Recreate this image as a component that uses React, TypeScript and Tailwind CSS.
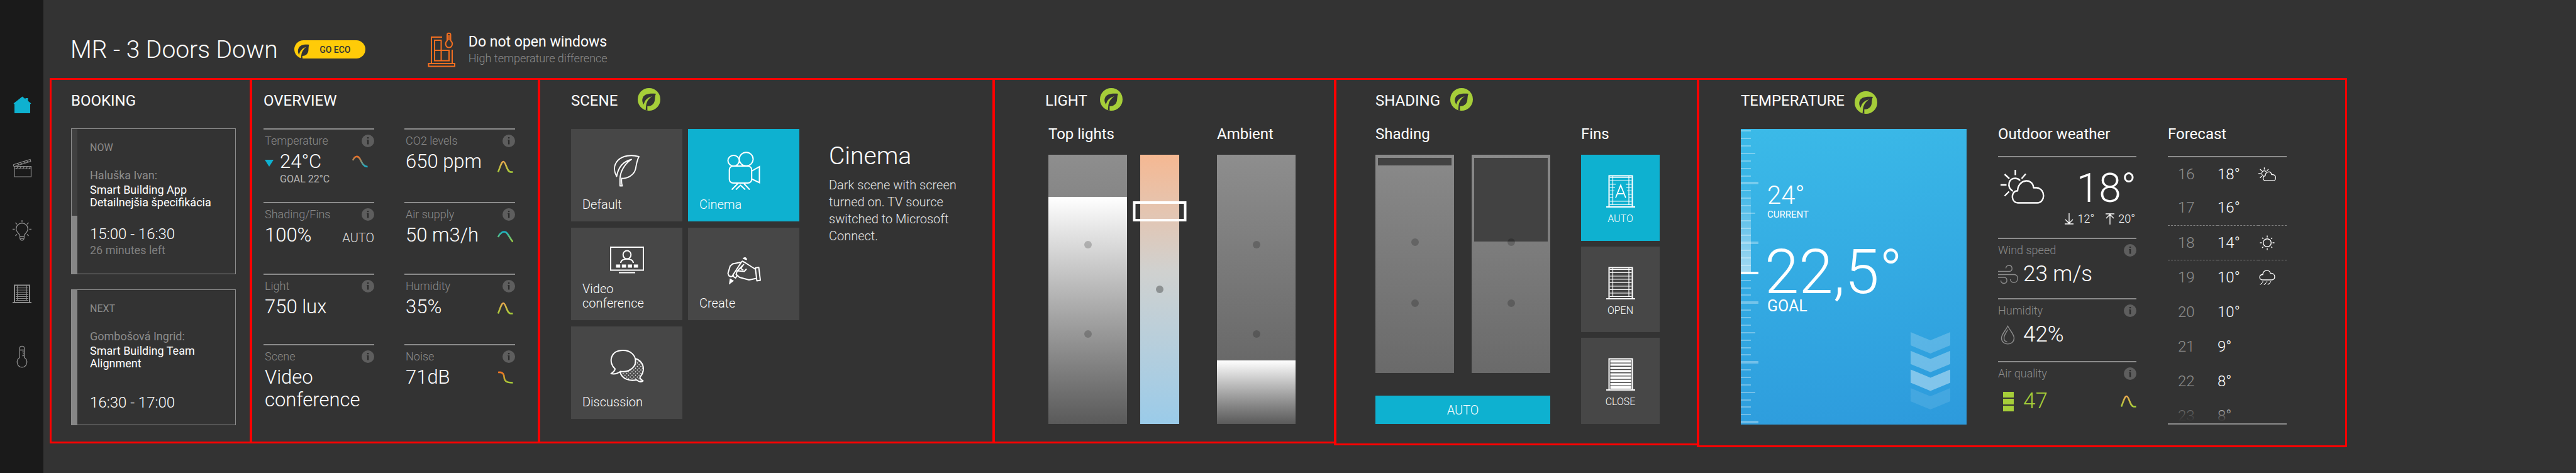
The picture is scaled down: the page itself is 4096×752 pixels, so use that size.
import React, { useState } from "react";

/* ---------- icons ---------- */

function EcoBadge() {
  return (
    <svg className="h-9 w-9 shrink-0" viewBox="0 0 36 36" aria-hidden="true">
      <circle cx="18" cy="18" r="18" fill="#a6ce39" />
      <path
        fill="#333333"
        d="M29 9C20 8 12 9 9 13.6C6.3 18 7 22 9.6 26.3C11 20 15 15 23 13C17 17 14 22 13.3 28L12.6 35.2L15.4 36L15.3 29C21 29 26 26 27 20C27.7 15 27.4 12 29 9Z"
      />
    </svg>
  );
}

function GoEcoLeaf() {
  return (
    <svg className="h-7 w-5 shrink-0" viewBox="0 0 20 28" aria-hidden="true">
      <path
        fill="#333333"
        d="M18.5 6C11 5 4.5 6.5 2 11C0 15 0.600 19 2.600 22.500C3.500 16.500 7 12 13.500 9.800C9 13.500 6.400 18 6 23.500L5.500 28H8L7.700 24C12.500 24 16.500 21 17.300 16C17.700 12 17.500 9 18.500 6Z"
      />
    </svg>
  );
}

function WindowAlertIcon() {
  return (
    <svg className="h-14 w-11 shrink-0" viewBox="0 0 44 56" fill="none" stroke="#f36f21" strokeWidth="2" aria-hidden="true">
      <path d="M23 8H6V50M39 28V50M11 13H21.500V45.500H11ZM11 29H34V45.500H21.500M1.500 50H43V54.500H1.500Z" />
      <path d="M31 4.500C31 0.800 36.500 0.800 36.500 4.500V13.500C41.500 18 38.500 24.500 33.800 24.500C29 24.500 26.500 18 31 13.500Z" />
      <path d="M33.800 5V13" />
    </svg>
  );
}

function HomeIcon() {
  return (
    <svg className="h-9 w-9" viewBox="0 0 36 36" aria-hidden="true">
      <path fill="#0eb1d0" d="M4.500 15.500L18.500 4.500L23.500 8.400V7H27.500V11.500L32.500 15.500L31 16.500V31H6V16.500Z" />
    </svg>
  );
}

function ClapperIcon() {
  return (
    <svg className="h-9 w-9" viewBox="0 0 36 36" fill="none" stroke="#8c8c8c" strokeWidth="1.200" aria-hidden="true">
      <path d="M6 15.500H32.500V32H6ZM6 19.500H32.500" />
      <path d="M5 12.500L31 4.500L31.800 7.500L6.500 15.500C4 16 4 12.800 5 12.500Z" />
      <path d="M9 19.500L12 15.500M14 19.500L17 15.500M19 19.500L22 15.500M24 19.500L27 15.500M29 19.500L32 15.500M10 11L13.500 13M15 9.500L18.500 11.500M20 8L23.500 10M25 6.500L28.500 8.500" />
    </svg>
  );
}

function BulbIcon() {
  return (
    <svg className="h-9 w-9" viewBox="0 0 36 36" fill="none" stroke="#8c8c8c" strokeWidth="1.300" aria-hidden="true">
      <path d="M14.500 28V25.500C14.500 23 8.700 20.500 8.700 14.800C8.700 3 27.300 3 27.300 14.800C27.300 20.500 21.500 23 21.500 25.500V28C21.500 29 21.500 33 18 33C14.500 33 14.500 29 14.500 28ZM14.500 27H21.500M15.500 30H20.500" />
      <path d="M18 1V4.500M3 15.500H6.500M29.500 15.500H33M7.500 5L10 7.500M28.500 5L26 7.500M7.500 26L10 23.500M28.500 26L26 23.500" />
    </svg>
  );
}

function BlindsNavIcon() {
  return (
    <svg className="h-9 w-9" viewBox="0 0 36 36" fill="none" stroke="#8c8c8c" aria-hidden="true">
      <path strokeWidth="2" d="M6 31V4.500H30V31M3 32H33" />
      <path strokeWidth="1" d="M10.500 5V29M25.500 5V29M8 7.500H28M8 10.500H28M8 13.500H28M8 16.500H28M8 19.500H28M8 22.500H28M8 25.500H28M8 28.500H28" />
    </svg>
  );
}

function ThermometerIcon() {
  return (
    <svg className="h-9 w-9" viewBox="0 0 36 36" fill="none" stroke="#8c8c8c" strokeWidth="1.300" aria-hidden="true">
      <path d="M14.300 19.500V5C14.300 0.200 21.700 0.200 21.700 5V19.500C29 24 25.500 34.800 18 34.800C10.500 34.800 7 24 14.300 19.500ZM14.300 7.500H21.700M18.500 10.500H21.700M19.500 13.500H21.700M18.500 16.500H21.700" />
    </svg>
  );
}

function LeafIcon() {
  return (
    <svg className="h-[51px] w-[41px]" viewBox="0 0 41 51" fill="none" stroke="#ffffff" strokeWidth="1.900" strokeLinejoin="round" aria-hidden="true">
      <path d="M40 3C28 -0.500 14 1 6.500 9C-1 17 0.500 27 4.500 34.500C6.500 23 13 11 28 7.500C16 15 10.300 28 9.800 38V49.500H13.500C12.200 46 12 42 12.500 37.500C22 38.500 32 32 34.500 23C36 16 36.500 9 40 3Z" />
    </svg>
  );
}

function CameraIcon() {
  return (
    <svg className="h-[61px] w-[53px]" viewBox="0 0 53 61" fill="none" stroke="#ffffff" strokeWidth="2" aria-hidden="true">
      <ellipse cx="10.500" cy="14.500" rx="9" ry="8.500" />
      <ellipse cx="30.500" cy="12" rx="11" ry="10.800" />
      <rect x="3.700" y="23" width="35.500" height="27" rx="6" />
      <path d="M39.200 31L51.500 24V49.500L39.200 43.500M17 51L7.500 60.500M27 51L36 60.500M14 60.500L21.500 53.500L29 60.500" />
    </svg>
  );
}

function VideoConferenceIcon() {
  return (
    <svg className="h-[50px] w-[54px]" viewBox="0 0 54 50" fill="none" stroke="#ffffff" strokeWidth="2" aria-hidden="true">
      <rect x="1" y="1" width="52" height="36.500" />
      <ellipse cx="27" cy="13" rx="6.300" ry="6.500" />
      <path d="M17 26C17.500 17.500 36.500 17.500 37 26M14 41.500H40" />
      <path fill="#ffffff" stroke="none" d="M9.500 28.500H16.200V33.500H9.500ZM18.800 28.500H25.500V33.500H18.800ZM28.300 28.500H35V33.500H28.300ZM37.800 28.500H44.500V33.500H37.800Z" />
    </svg>
  );
}

function CreateIcon() {
  return (
    <svg className="h-[48px] w-[54px]" viewBox="0 -3 54 48" fill="none" stroke="#ffffff" strokeWidth="2" strokeLinejoin="round" aria-hidden="true">
      <path fill="#ffffff" stroke="none" d="M24.800 3.500C26 -0.500 32.500 0 31.800 5.800ZM3 44.500L4.500 34.500L11 38.500Z" />
      <path d="M24 7L8.500 30.500L13.500 34L17 29M24 7L29.500 10L45 20M21.500 9L9 11.500L5 15L1.500 26.500L3 30.500L6.500 32L11 29.500" />
      <path d="M27 12L16 23L14.500 28.500L20 33L35 37L47 34.500M16 22.500L27.500 23.500L31 19.500M25 14L22 19L26 21.500" />
      <path d="M45 18L50.500 17L53 37.500L47.500 38.500Z" />
    </svg>
  );
}

function DiscussionIcon() {
  return (
    <svg className="h-[60px] w-[54px]" viewBox="0 0 54 60" aria-hidden="true">
      <defs>
        <pattern id="bubble-dots" width="5.600" height="5.600" patternUnits="userSpaceOnUse">
          <circle cx="1.400" cy="1.400" r="0.950" fill="#ffffff" />
          <circle cx="4.200" cy="4.200" r="0.950" fill="#ffffff" />
        </pattern>
      </defs>
      <path
        fill="url(#bubble-dots)"
        stroke="#ffffff"
        strokeWidth="2"
        strokeLinejoin="round"
        d="M40 14C48 16 53 23 53 30C53 36 51 40 47.500 43.500C47.500 46 50 48 52.500 49.500C50 52 46 51 42 48C30 50.500 19 46 16 36Z"
      />
      <path
        fill="#474747"
        stroke="#ffffff"
        strokeWidth="2"
        strokeLinejoin="round"
        d="M8 30.500C-3 21 0 1 20.500 1C33 1 40.500 9 40.500 18C40.500 29 29 36.500 16.500 34.500C12 38 6 39 1.500 38C5 36 7.500 34 8 30.500Z"
      />
    </svg>
  );
}

function FinsIcon({ mode }: { mode: "auto" | "open" | "close" }) {
  return (
    <svg className="h-[52px] w-[46px]" viewBox="0 0 46 52" fill="none" stroke="#ffffff" aria-hidden="true">
      <path strokeWidth="2" d="M4.500 50V1.500H41.500V50M0 51H46" />
      {mode === "close" ? (
        <path
          strokeWidth="3.800"
          d="M6.500 5.500H39.500M6.500 10.700H39.500M6.500 15.900H39.500M6.500 21.100H39.500M6.500 26.300H39.500M6.500 31.500H39.500M6.500 36.700H39.500M6.500 41.900H39.500M6.500 47H39.500"
        />
      ) : null}
      {mode === "open" ? (
        <path
          strokeWidth="1.200"
          d="M10.500 2V48M36 2V48M5.500 4.500H40.500M5.500 9.500H40.500M5.500 15H40.500M5.500 20H40.500M5.500 25.500H40.500M5.500 31H40.500M5.500 36.500H40.500M5.500 42H40.500M5.500 47.500H40.500"
        />
      ) : null}
      {mode === "auto" ? (
        <path
          strokeWidth="1.200"
          d="M10.500 2V48M36 2V48M5.500 4.500H40.500M5.500 9.500H40.500M5.500 42H40.500M5.500 47.500H40.500M5.500 15H15M31 15H40.500M5.500 20H14M32 20H40.500M5.500 25.500H13M33 25.500H40.500M5.500 31H11M35 31H40.500M5.500 36.500H10M36 36.500H40.500"
        />
      ) : null}
      {mode === "auto" ? <path strokeWidth="1.800" d="M15 36.500L23 16.500L31 36.500M17.800 30H28.200" /> : null}
    </svg>
  );
}

function PartlyCloudyIcon({ className, weight }: { className: string; weight: number }) {
  return (
    <svg className={className} viewBox="0 0 70 54" fill="none" stroke="#ffffff" strokeWidth={weight} strokeLinejoin="round" aria-hidden="true">
      <path d="M27.500 52.500H58.500C71 52.500 72.500 30.500 57.500 28.500H52.500C51 12.500 28 14 27 33.500H25.500C16 35 16.500 52 27.500 52.500Z" />
      <path d="M19.500 34C9 27 13 12.500 24 13.500C27 13.800 29.500 15 31 17M23.500 0V8.500M0 24H9.500M6.500 7L14 14M40 6.500L33.500 14M6.500 41.500L13.500 34.500" />
    </svg>
  );
}

function SunIcon() {
  return (
    <svg className="h-6 w-7" viewBox="0 0 28 24" fill="none" stroke="#ffffff" strokeWidth="1.400" aria-hidden="true">
      <circle cx="14" cy="12" r="6.300" />
      <path d="M14 0.500V3.500M14 20.500V23.500M2.500 12H5.500M22.500 12H25.500M6 4L7.800 5.800M22 4L20.200 5.800M6 20L7.800 18.200M22 20L20.200 18.200" />
    </svg>
  );
}

function RainIcon() {
  return (
    <svg className="h-6 w-7" viewBox="0 0 28 24" fill="none" stroke="#ffffff" strokeWidth="1.300" aria-hidden="true">
      <path d="M6.500 16C0.500 16 0.500 7.500 7 7.500C7.500 -1 18.500 -0.500 19 5.500C27.500 4.500 28 16 21.500 16Z" />
      <path strokeDasharray="2.200 1" d="M7.500 18.500L3 24M14 18.500L9 24M20 18.500L15 24" />
    </svg>
  );
}

function WindIcon() {
  return (
    <svg className="h-[31px] w-8 shrink-0" viewBox="0 0 32 31" fill="none" stroke="#8c8c8c" strokeWidth="1.400" aria-hidden="true">
      <path d="M0 10.500H18C24 10.500 23.500 1 17.500 1C14.500 1 12.500 3 12.500 5.500M0 15.500H26C33 15.500 33 28 25.500 28C22 28 19.500 26 19.500 23M0 20H10C15.500 20 15.500 29.500 9.500 29.500C6.500 29.500 4.500 27.500 4.500 25" />
    </svg>
  );
}

function DropIcon() {
  return (
    <svg className="h-[31px] w-8 shrink-0" viewBox="0 0 32 31" fill="none" stroke="#8c8c8c" strokeWidth="1.400" aria-hidden="true">
      <path d="M15.500 1.500C11 10 5.500 14.500 5.500 20.500C5.500 33 25.500 33 25.500 20.500C25.500 14.500 20 10 15.500 1.500Z" />
      <path d="M15.500 7C13 12 9.500 15.500 9.500 20.500C9.500 23.500 11.500 26 14.500 26.500" />
    </svg>
  );
}

function ArrowToLine({ up }: { up?: boolean }) {
  return (
    <svg className="h-[18px] w-[14px]" viewBox="0 0 14 18" fill="none" stroke="#ffffff" strokeWidth="1.300" aria-hidden="true">
      {up ? <path d="M0 1H14M7 18V2M1 8L7 2L13 8" /> : <path d="M0 17H14M7 0V16M1 10L7 16L13 10" />}
    </svg>
  );
}

type TrendKind = "coolDown" | "peak" | "supply" | "drop";

const TRENDS: Record<TrendKind, { d: string; top: string; bottom: string }> = {
  coolDown: { d: "M1 8C4 1 9 0 12 5C15 10 17 18 24.500 18", top: "#f36f21", bottom: "#0eb1d0" },
  peak: { d: "M1 18.500C4 12 6 2 9.500 2C13.500 2 14.500 18.500 21 18.500H24.500", top: "#f0a850", bottom: "#a6ce39" },
  supply: { d: "M1 11C4 4 9 1.500 13 3C17 5 19 12 24.500 18.500", top: "#0eb1d0", bottom: "#a6ce39" },
  drop: { d: "M1 2C7 1.500 10 3 10.500 9C11 15 13 18.500 24.500 18.500", top: "#f36f21", bottom: "#a6ce39" },
};

function Trend({ kind, className }: { kind: TrendKind; className?: string }) {
  const t = TRENDS[kind];
  const id = "trend-" + kind;
  return (
    <svg className={"h-5 w-[25px] shrink-0 " + (className ?? "")} viewBox="0 0 25 20" fill="none" aria-hidden="true">
      <defs>
        <linearGradient id={id} gradientUnits="userSpaceOnUse" x1="0" y1="1" x2="0" y2="19">
          <stop offset="0" stopColor={t.top} />
          <stop offset="1" stopColor={t.bottom} />
        </linearGradient>
      </defs>
      <path d={t.d} stroke={`url(#${id})`} strokeWidth="2.600" />
    </svg>
  );
}

function InfoButton({ topic }: { topic: string }) {
  return (
    <button type="button" aria-label={"About " + topic} className="h-5 w-5 shrink-0">
      <svg className="h-5 w-5" viewBox="0 0 20 20" aria-hidden="true">
        <circle cx="10" cy="10" r="10" fill="#5e5e5e" />
        <path fill="#2b2b2b" d="M8.900 4H11.300V6.300H8.900ZM8.200 8H11.300V15.500H8.900V9.300H8.200Z" />
      </svg>
    </button>
  );
}

/* ---------- shared parts ---------- */

function Panel({
  title,
  eco,
  ecoClass,
  className,
  children,
}: {
  title: string;
  eco?: boolean;
  ecoClass?: string;
  className: string;
  children: React.ReactNode;
}) {
  return (
    <section className={"border-[3px] border-[#ff0000] pt-[13px] " + className}>
      <div className="flex h-9 items-center">
        <h2 className="pt-1 text-2xl/7 font-normal">{title}</h2>
        {eco ? (
          <span className={ecoClass}>
            <EcoBadge />
          </span>
        ) : null}
      </div>
      {children}
    </section>
  );
}

function Dot({ at, className }: { at: number; className?: string }) {
  return (
    <span
      className={"pointer-events-none absolute left-1/2 size-3 -translate-x-1/2 -translate-y-1/2 rounded-full " + (className ?? "bg-black/20")}
      style={{ top: at + "%" }}
    />
  );
}

function VerticalRange({
  label,
  value,
  onChange,
}: {
  label: string;
  value: number;
  onChange: (v: number) => void;
}) {
  return (
    <input
      type="range"
      min={0}
      max={100}
      step="any"
      aria-label={label}
      value={value}
      onChange={(e) => onChange(Number(e.target.value))}
      className="absolute inset-0 h-full w-full cursor-pointer opacity-0 [direction:rtl] [writing-mode:vertical-lr]"
    />
  );
}

/* ---------- booking ---------- */

function BookingCard({
  state,
  owner,
  lines,
  time,
  left,
  elapsed,
  className,
  timeClass,
}: {
  state: string;
  owner: string;
  lines: string[];
  time: string;
  left?: string;
  elapsed: number;
  className: string;
  timeClass: string;
}) {
  return (
    <article className={"flex border border-[#8c8c8c] " + className}>
      <div className="w-[9px] shrink-0 bg-[#868686]">
        <div className="bg-[#404040]" style={{ height: elapsed + "%" }} />
      </div>
      <div className="pt-5 pl-5">
        <p className="text-base/5 text-[#8c8c8c]">{state}</p>
        <p className="mt-6 text-lg/5 text-[#8c8c8c]">{owner}</p>
        <h3 className="mt-[3px] text-lg/5 font-normal">
          {lines.map((l) => (
            <span key={l} className="block">
              {l}
            </span>
          ))}
        </h3>
        <p className={"text-2xl/7 font-light " + timeClass}>{time}</p>
        {left ? <p className="mt-0.5 text-lg/5 text-[#808080]">{left}</p> : null}
      </div>
    </article>
  );
}

function Booking() {
  return (
    <Panel title="BOOKING" className="-mr-1 mb-[6px] pr-[23px] pl-[31px]">
      <div className="mt-7 grid gap-6">
        <BookingCard
          state="NOW"
          owner="Haluška Ivan:"
          lines={["Smart Building App", "Detailnejšia špecifikácia"]}
          time="15:00 - 16:30"
          left="26 minutes left"
          elapsed={60}
          className="min-h-[232px]"
          timeClass="mt-[26px]"
        />
        <BookingCard
          state="NEXT"
          owner="Gombošová Ingrid:"
          lines={["Smart Building Team", "Alignment"]}
          time="16:30 - 17:00"
          elapsed={0}
          className="min-h-[216px]"
          timeClass="mt-[38px]"
        />
      </div>
    </Panel>
  );
}

/* ---------- overview ---------- */

function Metric({
  label,
  value,
  trend,
  trendClass,
  falling,
  goal,
  note,
}: {
  label: string;
  value: string;
  trend?: TrendKind;
  trendClass?: string;
  falling?: boolean;
  goal?: string;
  note?: string;
}) {
  return (
    <div className="border-t-2 border-[#8c8c8c] pt-2">
      <div className="flex items-center justify-between pl-0.5">
        <h3 className="text-lg/5 font-light text-[#8c8c8c]">{label}</h3>
        <InfoButton topic={label} />
      </div>
      <div className="mt-[5px] flex items-center justify-between pl-0.5">
        <div className="flex items-center gap-[10px]">
          {falling ? (
            <svg className="mt-1 h-[11px] w-[14px]" viewBox="0 0 14 11" aria-hidden="true">
              <path fill="#0eb1d0" d="M0 0H14L7 11Z" />
            </svg>
          ) : null}
          <p className="text-[31px]/9 font-light">{value}</p>
        </div>
        {note ? <p className="pt-2 text-xl/7 font-light text-[#e0e0e0]">{note}</p> : null}
        {trend ? <Trend kind={trend} className={trendClass} /> : null}
      </div>
      {goal ? <p className="pl-[26px] text-base/5 text-[#b8b8b8]">{goal}</p> : null}
    </div>
  );
}

function Overview() {
  return (
    <Panel title="OVERVIEW" className="-mr-1 mb-[6px] pr-[37px] pl-[19px]">
      <div className="mt-7 grid grid-cols-2 grid-rows-[117px_114px_112px_auto] gap-x-12">
        <Metric label="Temperature" value="24°C" falling goal="GOAL 22°C" trend="coolDown" trendClass="mr-[10px]" />
        <Metric label="CO2 levels" value="650 ppm" trend="peak" trendClass="mr-[3px] self-end" />
        <Metric label="Shading/Fins" value="100%" note="AUTO" />
        <Metric label="Air supply" value="50 m3/h" trend="supply" trendClass="mr-[3px] mt-1" />
        <Metric label="Light" value="750 lux" />
        <Metric label="Humidity" value="35%" trend="peak" trendClass="mr-[3px] mt-1" />
        <Metric label="Scene" value="Video conference" />
        <Metric label="Noise" value="71dB" trend="drop" trendClass="mr-[3px]" />
      </div>
    </Panel>
  );
}

/* ---------- scene ---------- */

const SCENES = [
  { name: "Default", icon: <LeafIcon /> },
  { name: "Cinema", icon: <CameraIcon /> },
  { name: "Video conference", icon: <VideoConferenceIcon /> },
  { name: "Create", icon: <CreateIcon /> },
  { name: "Discussion", icon: <DiscussionIcon /> },
];

function Scene() {
  const [active, setActive] = useState("Cinema");
  return (
    <Panel title="SCENE" eco ecoClass="ml-8" className="-mr-1 mb-[6px] pl-[50px]">
      <div className="mt-[29px] flex">
        <div className="grid grid-cols-[177px_177px] gap-x-[9px] gap-y-[10px]">
          {SCENES.map((s) => (
            <button
              key={s.name}
              type="button"
              aria-pressed={active === s.name}
              onClick={() => setActive(s.name)}
              className={
                "flex h-[147px] flex-col px-[18px] pt-6 pb-[15px] text-left " +
                (active === s.name ? "bg-[#0eb1d0]" : "bg-[#474747]")
              }
            >
              <span className="flex flex-1 items-center self-center">{s.icon}</span>
              <span className="w-[110px] text-xl/[23px] font-light">{s.name}</span>
            </button>
          ))}
        </div>
        <div className="mt-[21px] ml-[47px] w-[220px]">
          <h3 className="text-[39px]/[44px] font-light">Cinema</h3>
          <p className="mt-[11px] text-xl/[27px] font-light text-[#e6e6e6]">
            Dark scene with screen turned on. TV source switched to Microsoft Connect.
          </p>
        </div>
      </div>
    </Panel>
  );
}

/* ---------- light ---------- */

function LightBar({ label, initial }: { label: string; initial: number }) {
  const [value, setValue] = useState(initial);
  return (
    <div className="relative flex h-[428px] w-[125px] flex-col justify-end bg-linear-to-b from-[#8e8e8e] to-[#5e5e5e]">
      <div className="bg-linear-to-b from-white to-[#5a5a5a]" style={{ height: value + "%" }} />
      <Dot at={33.3} />
      <Dot at={66.7} />
      <VerticalRange label={label} value={value} onChange={setValue} />
    </div>
  );
}

function WarmthBar() {
  const [value, setValue] = useState(79);
  return (
    <div className="relative h-[428px] w-[62px] bg-linear-to-b from-[#f5b892] via-[#d0d1cf] via-43% to-[#9acbe9]">
      <Dot at={50} className="bg-black/30" />
      <span
        className="absolute left-1/2 h-8 w-[85px] -translate-x-1/2 -translate-y-1/2 border-4 border-white"
        style={{ top: 100 - value + "%" }}
      />
      <VerticalRange label="Colour temperature" value={value} onChange={setValue} />
    </div>
  );
}

function Light() {
  return (
    <Panel title="LIGHT" eco ecoClass="ml-5" className="-mr-1 mb-[6px] pl-[81px]">
      <div className="mt-[23px] flex pl-[5px]">
        <div>
          <h3 className="text-2xl/7 font-normal">Top lights</h3>
          <div className="mt-[19px] flex gap-[21px]">
            <LightBar label="Top lights" initial={84.4} />
            <WarmthBar />
          </div>
        </div>
        <div className="ml-[60px]">
          <h3 className="text-2xl/7 font-normal">Ambient</h3>
          <div className="mt-[19px]">
            <LightBar label="Ambient" initial={23.6} />
          </div>
        </div>
      </div>
    </Panel>
  );
}

/* ---------- shading ---------- */

function ShadeBar({ label, initial }: { label: string; initial: number }) {
  const [value, setValue] = useState(initial);
  return (
    <div className="relative h-[347px] w-[125px] bg-linear-to-b from-[#8a8a8a] to-[#6a6a6a] px-1 pt-[5px]">
      <div className="bg-[#424242]" style={{ height: 100 - value + "%" }} />
      <Dot at={40} />
      <Dot at={68} />
      <VerticalRange label={label} value={value} onChange={setValue} />
    </div>
  );
}

const FINS: { label: string; mode: "auto" | "open" | "close" }[] = [
  { label: "AUTO", mode: "auto" },
  { label: "OPEN", mode: "open" },
  { label: "CLOSE", mode: "close" },
];

function Shading() {
  const [fins, setFins] = useState("auto");
  return (
    <Panel title="SHADING" eco ecoClass="ml-4" className="-mr-1 mb-[3px] pl-[63px]">
      <div className="mt-[23px] flex">
        <div>
          <h3 className="text-2xl/7 font-normal">Shading</h3>
          <div className="mt-[19px] flex gap-7">
            <ShadeBar label="Left shade" initial={96.5} />
            <ShadeBar label="Right shade" initial={61.1} />
          </div>
          <button type="button" className="mt-9 h-[45px] w-full bg-[#0eb1d0] text-xl/6 font-light">
            AUTO
          </button>
        </div>
        <div className="ml-[49px]">
          <h3 className="text-2xl/7 font-normal">Fins</h3>
          <div className="mt-[19px] grid h-[428px] w-[125px] grid-rows-3 gap-[9px]">
            {FINS.map((f) => (
              <button
                key={f.mode}
                type="button"
                aria-pressed={fins === f.mode}
                onClick={() => setFins(f.mode)}
                className={
                  "flex flex-col items-center justify-start gap-2 pt-8 " + (fins === f.mode ? "bg-[#0eb1d0]" : "bg-[#474747]")
                }
              >
                <FinsIcon mode={f.mode} />
                <span className="text-base/5 font-light">{f.label}</span>
              </button>
            ))}
          </div>
        </div>
      </div>
    </Panel>
  );
}

/* ---------- temperature ---------- */

const TICKS = Array.from({ length: 40 }, (_, i) => i);

function Scale() {
  return (
    <svg className="absolute top-0 left-0 h-full w-7" viewBox="0 0 28 470" aria-hidden="true">
      <defs>
        <linearGradient id="scale-range" x1="0" y1="0" x2="0" y2="1">
          <stop offset="0" stopColor="#ffffff" stopOpacity="0" />
          <stop offset="1" stopColor="#ffffff" stopOpacity="0.550" />
        </linearGradient>
      </defs>
      <rect x="0" y="86" width="16" height="143" fill="url(#scale-range)" />
      {TICKS.map((i) => {
        const y = 3.3 + i * 11.87;
        const goal = i === 19;
        const major = i % 8 === 7 || goal;
        const medium = i % 8 === 3;
        return (
          <rect
            key={i}
            x="0"
            y={Math.round(y - (major ? 2 : 1))}
            width={major ? 28 : medium ? 23 : 16}
            height={major ? 4 : 2}
            fill="#ffffff"
            opacity={goal ? 1 : 0.32}
          />
        );
      })}
    </svg>
  );
}

function Chevrons() {
  return (
    <svg className="absolute right-[26px] bottom-6 h-[123px] w-[63px]" viewBox="0 0 63 123" fill="#ffffff" aria-hidden="true">
      <path opacity="0.2" d="M0 0L31.500 13L63 0V21L31.500 34L0 21Z" />
      <path opacity="0.3" d="M0 29.700L31.500 42.700L63 29.700V50.700L31.500 63.700L0 50.700Z" />
      <path opacity="0.4" d="M0 59.400L31.500 72.400L63 59.400V80.400L31.500 93.400L0 80.400Z" />
      <path opacity="0.1" d="M0 89L31.500 102L63 89V110L31.500 123L0 110Z" />
    </svg>
  );
}

function Thermostat() {
  return (
    <div className="relative h-[470px] w-[359px] bg-linear-170 from-[#3bbae8] to-[#2d9adc] pt-[86px] pl-[42px]">
      <Scale />
      <p className="text-[40px]/[40px] font-light">24°</p>
      <p className="text-[15px]/5">CURRENT</p>
      <p className="mt-[42px] -ml-1 text-[98px]/[80px] font-light">22,5°</p>
      <p className="text-[25px]/7">GOAL</p>
      <Chevrons />
    </div>
  );
}

function WeatherRow({
  label,
  icon,
  value,
  className,
  trailing,
}: {
  label: string;
  icon: React.ReactNode;
  value: string;
  className?: string;
  trailing?: React.ReactNode;
}) {
  return (
    <div className="border-t-2 border-[#8c8c8c] pt-2">
      <div className="flex items-center justify-between">
        <h4 className="text-lg/5 font-light text-[#8c8c8c]">{label}</h4>
        <InfoButton topic={label} />
      </div>
      <div className={"mt-2 flex items-center gap-2 " + (className ?? "")}>
        {icon}
        <p className="flex-1 text-[35px]/10 font-light">{value}</p>
        {trailing}
      </div>
    </div>
  );
}

function Outdoor() {
  return (
    <div className="ml-[50px] w-[220px]">
      <h3 className="text-2xl/7 font-normal">Outdoor weather</h3>
      <div className="mt-[21px] grid grid-rows-[130px_96px_100px_auto]">
        <div className="border-t-2 border-[#8c8c8c]">
          <div className="flex items-start justify-between pt-5 pl-1">
            <PartlyCloudyIcon className="h-[54px] w-[70px]" weight={2.4} />
            <p className="text-[64px]/[60px] font-light">18°</p>
          </div>
          <div className="mt-2 flex items-center justify-end gap-[18px] pr-0.5 text-lg/5 font-light">
            <span className="flex items-center gap-[6px]">
              <ArrowToLine />
              12°
            </span>
            <span className="flex items-center gap-[6px]">
              <ArrowToLine up />
              20°
            </span>
          </div>
        </div>
        <WeatherRow label="Wind speed" icon={<WindIcon />} value="23 m/s" />
        <WeatherRow label="Humidity" icon={<DropIcon />} value="42%" />
        <WeatherRow
          label="Air quality"
          className="pt-[6px] text-[#a6ce39]"
          value="47"
          icon={
            <span className="grid w-8 shrink-0 gap-0.5 pr-[7px] pl-2">
              <span className="h-[9px] bg-[#a6ce39]" />
              <span className="h-[9px] bg-[#a6ce39]" />
              <span className="h-[9px] bg-[#a6ce39]" />
            </span>
          }
          trailing={<Trend kind="peak" />}
        />
      </div>
    </div>
  );
}

const FORECAST: { hour: string; temp: string; icon?: React.ReactNode; dashed?: boolean; first?: boolean }[] = [
  { hour: "16", temp: "18°", icon: <PartlyCloudyIcon className="h-[22px] w-7" weight={3.2} />, first: true },
  { hour: "17", temp: "16°", dashed: true },
  { hour: "18", temp: "14°", icon: <SunIcon />, dashed: true },
  { hour: "19", temp: "10°", icon: <RainIcon /> },
  { hour: "20", temp: "10°" },
  { hour: "21", temp: "9°" },
  { hour: "22", temp: "8°" },
  { hour: "23", temp: "8°" },
];

function Forecast() {
  return (
    <div className="ml-[50px] w-[189px]">
      <h3 className="text-2xl/7 font-normal">Forecast</h3>
      <div className="relative mt-[21px] h-[427px] overflow-hidden border-y-2 border-[#8c8c8c]">
        <table className="w-full table-fixed border-collapse text-left text-2xl/7 font-light">
          <tbody>
            {FORECAST.map((f) => (
              <tr
                key={f.hour}
                className={
                  (f.first ? "h-[53px] " : "h-[55px] ") + (f.dashed ? "border-b border-dashed border-[#808080]" : "")
                }
              >
                <th scope="row" className="w-[79px] pl-4 font-light text-[#8c8c8c]">
                  {f.hour}
                </th>
                <td>{f.temp}</td>
                <td className="w-[45px]">{f.icon}</td>
              </tr>
            ))}
          </tbody>
        </table>
        <div className="pointer-events-none absolute inset-x-0 bottom-0 h-8 bg-linear-to-b from-[#333333]/0 to-[#333333] to-90%" />
      </div>
    </div>
  );
}

function Temperature() {
  return (
    <Panel title="TEMPERATURE" eco ecoClass="ml-4 pt-[10px]" className="pb-[33px] pl-[67px]">
      <div className="mt-[23px] flex">
        <div className="pt-[6px]">
          <Thermostat />
        </div>
        <Outdoor />
        <Forecast />
      </div>
    </Panel>
  );
}

/* ---------- page ---------- */

const NAV = [
  { name: "Home", icon: <HomeIcon /> },
  { name: "Scenes", icon: <ClapperIcon /> },
  { name: "Light", icon: <BulbIcon /> },
  { name: "Shading", icon: <BlindsNavIcon /> },
  { name: "Temperature", icon: <ThermometerIcon /> },
];

export default function App() {
  return (
    <div className="flex min-h-screen bg-[#333333] text-white [font-family:Roboto,sans-serif]">
      <nav className="flex w-[69px] shrink-0 flex-col items-center gap-16 bg-[#1a1a1a] pt-[149px]">
        {NAV.map((n) => (
          <a key={n.name} href={"#" + n.name.toLowerCase()} aria-label={n.name}>
            {n.icon}
          </a>
        ))}
      </nav>
      <main className="min-w-0 flex-1 pl-[10px]">
        <header className="flex h-[124px] items-center pt-[33px] pl-[33px]">
          <h1 className="text-[39px]/[44px] font-light">MR - 3 Doors Down</h1>
          <button
            type="button"
            className="ml-[26px] flex h-[29px] w-[113px] items-center rounded-full bg-[#ffcb08] pl-[5px] text-sm font-medium text-[#333333]"
          >
            <GoEcoLeaf />
            <span className="flex-1 pr-2 text-center">GO ECO</span>
          </button>
          <div className="ml-[99px] flex items-center gap-[21px]">
            <WindowAlertIcon />
            <div>
              <p className="text-[23px]/7">Do not open windows</p>
              <p className="text-lg/6 font-light text-[#8c8c8c]">High temperature difference</p>
            </div>
          </div>
        </header>
        <div className="grid grid-cols-[318fr_458fr_723fr_543fr_577fr_1034fr_364fr]">
          <Booking />
          <Overview />
          <Scene />
          <Light />
          <Shading />
          <Temperature />
        </div>
      </main>
    </div>
  );
}
